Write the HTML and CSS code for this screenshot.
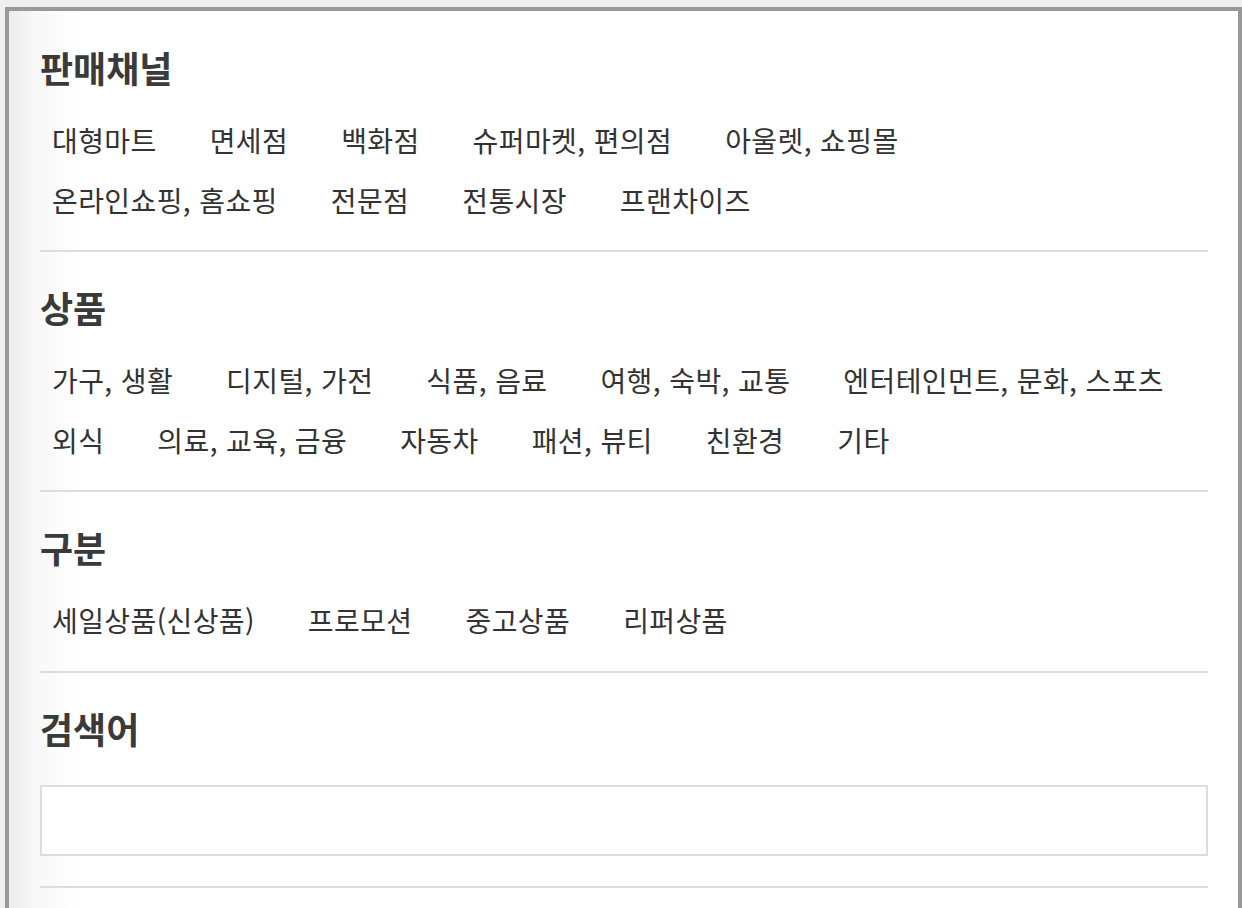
FILE: index.html
```html
<!DOCTYPE html>
<html lang="ko">
<head>
<meta charset="utf-8">
<title>필터</title>
<link rel="stylesheet" href="styles.css">
</head>
<body>
<div class="panel">
  <section class="group">
    <h2 class="group-title">판매채널</h2>
    <div class="options">
      <div class="row">
        <span class="opt">대형마트</span><span class="opt">면세점</span><span class="opt">백화점</span><span class="opt">슈퍼마켓, 편의점</span><span class="opt">아울렛, 쇼핑몰</span>
      </div>
      <div class="row">
        <span class="opt">온라인쇼핑, 홈쇼핑</span><span class="opt">전문점</span><span class="opt">전통시장</span><span class="opt">프랜차이즈</span>
      </div>
    </div>
  </section>
  <section class="group">
    <h2 class="group-title">상품</h2>
    <div class="options">
      <div class="row">
        <span class="opt">가구, 생활</span><span class="opt">디지털, 가전</span><span class="opt">식품, 음료</span><span class="opt">여행, 숙박, 교통</span><span class="opt">엔터테인먼트, 문화, 스포츠</span>
      </div>
      <div class="row">
        <span class="opt">외식</span><span class="opt">의료, 교육, 금융</span><span class="opt">자동차</span><span class="opt">패션, 뷰티</span><span class="opt">친환경</span><span class="opt">기타</span>
      </div>
    </div>
  </section>
  <section class="group group-type">
    <h2 class="group-title">구분</h2>
    <div class="options">
      <div class="row">
        <span class="opt">세일상품(신상품)</span><span class="opt">프로모션</span><span class="opt">중고상품</span><span class="opt">리퍼상품</span>
      </div>
    </div>
  </section>
  <section class="group search">
    <h2 class="group-title">검색어</h2>
    <input class="search-input" type="text">
  </section>
</div>
</body>
</html>
```
FILE: styles.css
```css
html, body {
  margin: 0;
  padding: 0;
}
body {
  background: #efefef;
  font-family: "Noto Sans CJK KR", "Noto Sans", sans-serif;
  color: #333;
  overflow: hidden;
  height: 908px;
}
.panel {
  margin: 7px 0 0 5px;
  width: 1237px;
  height: 901px;
  overflow: hidden;
  border: 4px solid #999;
  border-bottom: none;
  background: linear-gradient(to right, #ececec 0px, #f7f7f7 25px, #ffffff 70px);
  padding: 0 30px 0 31px;
  box-sizing: border-box;
}
.group {
  border-bottom: 2px solid #ddd;
  padding: 33px 0 20px;
}
.group:first-child {
  padding-top: 34px;
}
.group-type {
  padding-bottom: 21px;
}
.group-title {
  margin: 0;
  font-size: 36px;
  line-height: 44px;
  font-weight: 700;
  color: #3a3a3a;
  letter-spacing: 0;
}
.options {
  margin-top: 21px;
  padding-left: 12px;
}
.row {
  display: flex;
  column-gap: 53px;
  height: 60px;
  align-items: center;
}
.opt {
  font-size: 28px;
  line-height: 60px;
  letter-spacing: 0.4px;
  color: #333;
  white-space: nowrap;
}
.search {
  padding-bottom: 30px;
}
.search .group-title {
  margin-bottom: 35px;
}
.search-input {
  display: block;
  width: 100%;
  height: 71px;
  box-sizing: border-box;
  border: 2px solid #ddd;
  background: #fff;
  margin: 0;
  outline: none;
}
```
